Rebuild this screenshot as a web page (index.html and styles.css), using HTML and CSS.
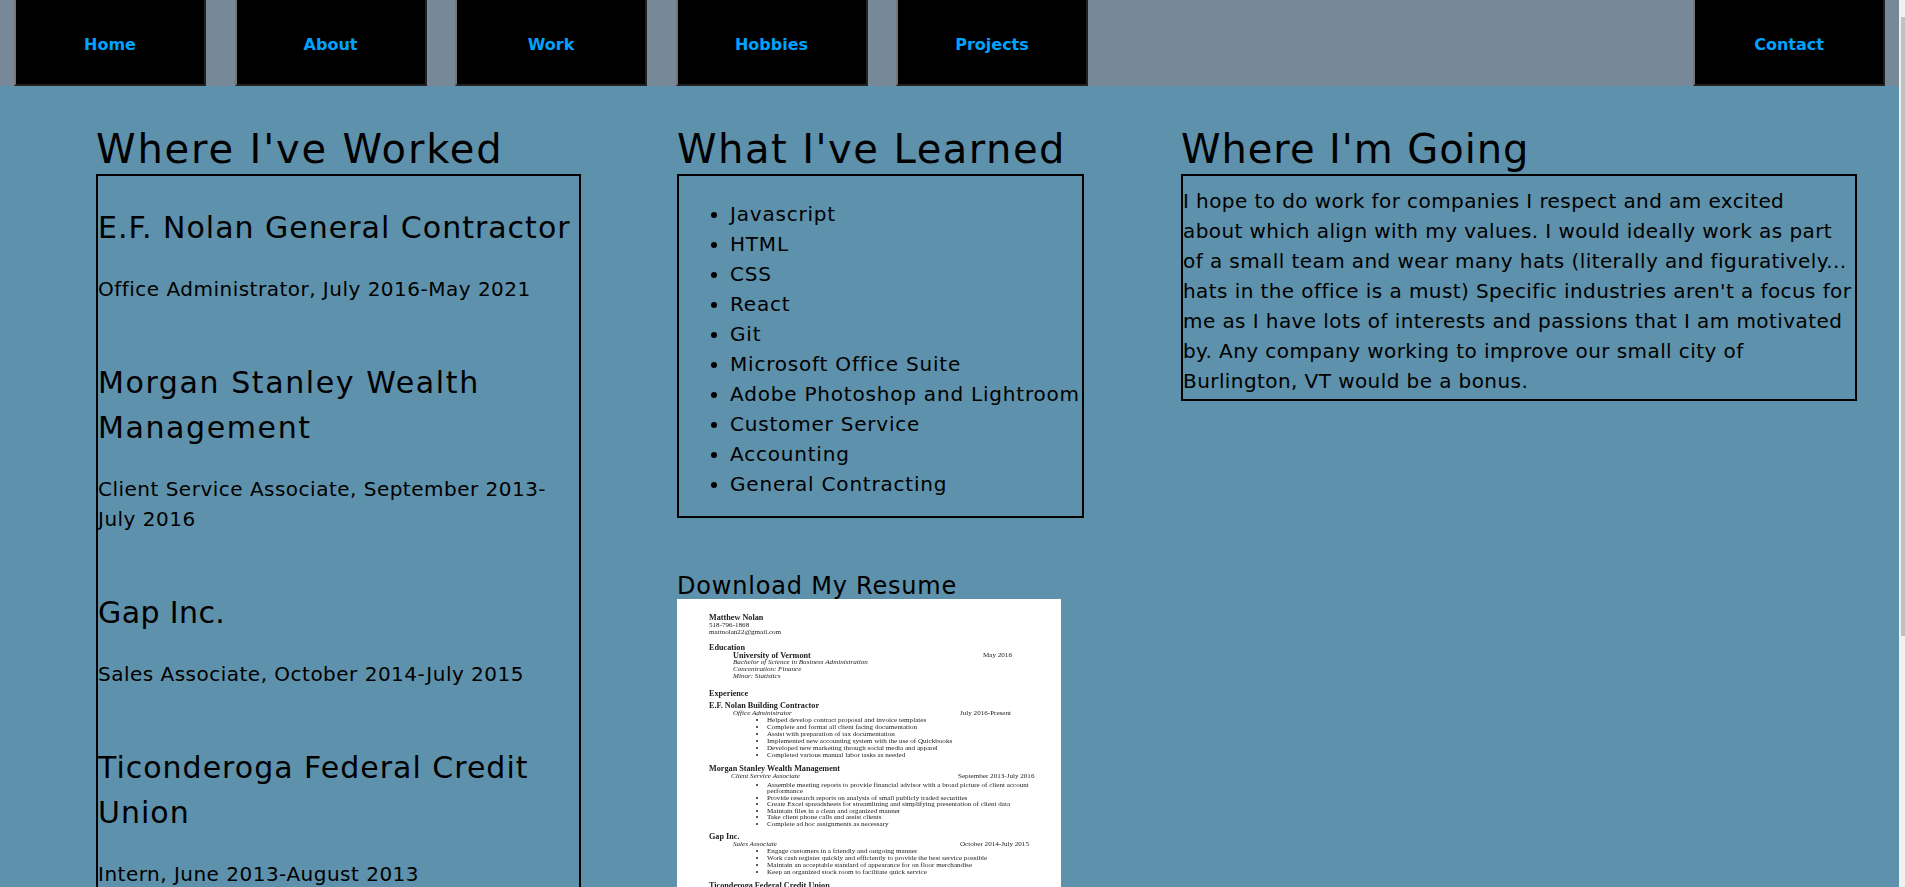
FILE: index.html
```html
<!doctype html>
<html lang="en">
<head>
    <meta charset="UTF-8">
    <title>Resume</title>
    <link rel="stylesheet" href="styles.css">
</head>
<body>
    <nav id="nav">
        <button>Home</button>
        <button>About</button>
        <button>Work</button>
        <button>Hobbies</button>
        <button>Projects</button>
        <button class="contact">Contact</button>
    </nav>
    <main id="main">
        <section>
            <h1>Where I've Worked</h1>
            <div class="box jobs">
                <h3>E.F. Nolan General Contractor</h3>
                <p>Office Administrator, July 2016-May 2021</p>
                <h3 class="wide">Morgan Stanley Wealth<br>Management</h3>
                <p>Client Service Associate, September 2013-<br>July 2016</p>
                <h3 class="narrow">Gap Inc.</h3>
                <p>Sales Associate, October 2014-July 2015</p>
                <h3>Ticonderoga Federal Credit<br>Union</h3>
                <p>Intern, June 2013-August 2013</p>
            </div>
        </section>
        <section>
            <h1 class="learned">What I've Learned</h1>
            <ul class="box skills">
                <li>Javascript</li>
                <li>HTML</li>
                <li>CSS</li>
                <li>React</li>
                <li>Git</li>
                <li>Microsoft Office Suite</li>
                <li>Adobe Photoshop and Lightroom</li>
                <li>Customer Service</li>
                <li>Accounting</li>
                <li>General Contracting</li>
            </ul>
            <h4>Download My Resume</h4>
            <div class="sheet">
                <b>Matthew Nolan</b>
                <div class="tall">518-796-1868</div>
                <div class="tall">mattnolan22@gmail.com</div>
                <b class="gap">Education</b>
                <div class="row may"><b>University of Vermont</b><span>May 2016</span></div>
                <i class="sub">Bachelor of Science in Business Administration</i>
                <i class="sub">Concentration: Finance</i>
                <i class="sub">Minor: Statistics</i>
                <b class="gap2">Experience</b>
                <b class="gap3">E.F. Nolan Building Contractor</b>
                <div class="row"><i>Office Administrator</i><span>July 2016-Present</span></div>
                <ul>
                    <li>Helped develop contract proposal and invoice templates</li>
                    <li>Complete and format all client facing documentation</li>
                    <li>Assist with preparation of tax documentation</li>
                    <li>Implemented new accounting system with the use of Quickbooks</li>
                    <li>Developed new marketing through social media and apparel</li>
                    <li>Completed various manual labor tasks as needed</li>
                </ul>
                <b class="gap4">Morgan Stanley Wealth Management</b>
                <div class="row client"><i>Client Service Associate</i><span>September 2013-July 2016</span></div>
                <ul class="tight">
                    <li>Assemble meeting reports to provide financial advisor with a broad picture of client account performance</li>
                    <li>Provide research reports on analysis of small publicly traded securities</li>
                    <li>Create Excel spreadsheets for streamlining and simplifying presentation of client data</li>
                    <li>Maintain files in a clean and organized manner</li>
                    <li>Take client phone calls and assist clients</li>
                    <li>Complete ad hoc assignments as necessary</li>
                </ul>
                <b class="gap4">Gap Inc.</b>
                <div class="row"><i>Sales Associate</i><span>October 2014-July 2015</span></div>
                <ul>
                    <li>Engage customers in a friendly and outgoing manner</li>
                    <li>Work cash register quickly and efficiently to provide the best service possible</li>
                    <li>Maintain an acceptable standard of appearance for on floor merchandise</li>
                    <li>Keep an organized stock room to facilitate quick service</li>
                </ul>
                <b class="gap4">Ticonderoga Federal Credit Union</b>
            </div>
        </section>
        <section>
            <h1 class="going-title">Where I'm Going</h1>
            <p class="box going">I hope to do work for companies I respect and am excited<br>about which align with my values. I would ideally work as part<br>of a small team and wear many hats (literally and figuratively...<br>hats in the office is a must) Specific industries aren't a focus for<br>me as I have lots of interests and passions that I am motivated<br>by. Any company working to improve our small city of<br>Burlington, VT would be a bonus.</p>
        </section>
    </main>
    <div id="scrollbar"><div class="thumb"></div></div>
</body>
</html>
```

FILE: styles.css
```css
*{
    box-sizing: border-box;
}
body{
    margin: 0 6px 0 0;
    background-color: #5e91ab;
    color: #000;
    font-family: "DejaVu Sans", sans-serif;
    font-size: 20px;
    line-height: 30px;
}
/* the browser's scrollbar does not show in the photo, so it is drawn */
#scrollbar{
    position: fixed;
    top: 0;
    right: 0;
    bottom: 0;
    width: 6px;
    padding: 17px 0 0 2px;
    background-color: #f1f1f1;
}
#scrollbar .thumb{
    height: 619px;
    background-color: #c1c1c1;
}
#nav{
    height: 86px;
    display: flex;
    gap: 28.5px;
    padding: 0 14px;
    background-color: #778899;
}
#nav button{
    width: 192px;
    height: 86px;
    padding: 4px 0 0;
    border: 2px outset #767676;
    border-top: 0;
    background-color: #000;
    color: #00a2ff;
    font-family: "DejaVu Sans", sans-serif;
    font-size: 16px;
    font-weight: bold;
}
#nav .contact{
    margin-left: auto;
}
#main{
    display: grid;
    grid-template-columns: 485px 408px 676px;
    column-gap: 96px;
    padding: 38px 0 126px 96px;
}
h1{
    margin: 0;
    font-size: 40px;
    font-weight: normal;
    line-height: 50px;
    letter-spacing: 1.85px;
}
h1.learned{
    letter-spacing: 1.5px;
}
h1.going-title{
    letter-spacing: 0.95px;
}
.box{
    border: 2px solid #000;
}
.jobs{
    height: 1000px;
    padding-top: 29px;
}
h3{
    margin: 0 0 23.5px;
    font-size: 30px;
    font-weight: normal;
    line-height: 45px;
    letter-spacing: 1px;
}
h3.wide{
    letter-spacing: 1.6px;
}
h3.narrow{
    letter-spacing: 0.4px;
}
.jobs p{
    margin: 0 0 56.5px;
    letter-spacing: 0.49px;
}
.skills{
    width: 407px;
    margin: 0;
    padding: 23px 0 17px 51px;
    letter-spacing: 0.8px;
}
h4{
    margin: 55px 0 0;
    font-size: 24px;
    font-weight: normal;
    line-height: 26px;
    letter-spacing: 0.8px;
}
.going{
    margin: 0;
    padding: 10px 0 3px;
    letter-spacing: 0.42px;
    white-space: nowrap;
}
/* resume picture */
.sheet{
    width: 384px;
    height: 497px;
    padding: 15px 0 0 32px;
    background-color: #fff;
    color: #222;
    font-family: "Liberation Serif", serif;
    font-size: 7.1px;
    line-height: 7px;
    filter: blur(0.6px);
}
.sheet b,.sheet i{
    display: block;
}
.sheet b{
    font-size: 8.2px;
}
.sheet .tall{
    margin-top: 0.5px;
}
.sheet .gap{
    margin-top: 8px;
}
.sheet .gap2{
    margin-top: 10px;
}
.sheet .gap3{
    margin-top: 4.5px;
}
.sheet .gap4{
    margin-top: 6px;
}
.sheet .sub{
    padding-left: 24px;
}
.sheet .row{
    display: flex;
    padding: 1px 0 0 24px;
}
.sheet .row > :first-child{
    width: 227px;
}
.sheet .may > :first-child{
    width: 250px;
}
.sheet .client{
    padding-left: 22px;
}
.sheet ul{
    margin: 0;
    padding: 0 24px 0 58px;
}
.sheet .tight{
    margin-top: 2px;
    line-height: 6.5px;
}
```
